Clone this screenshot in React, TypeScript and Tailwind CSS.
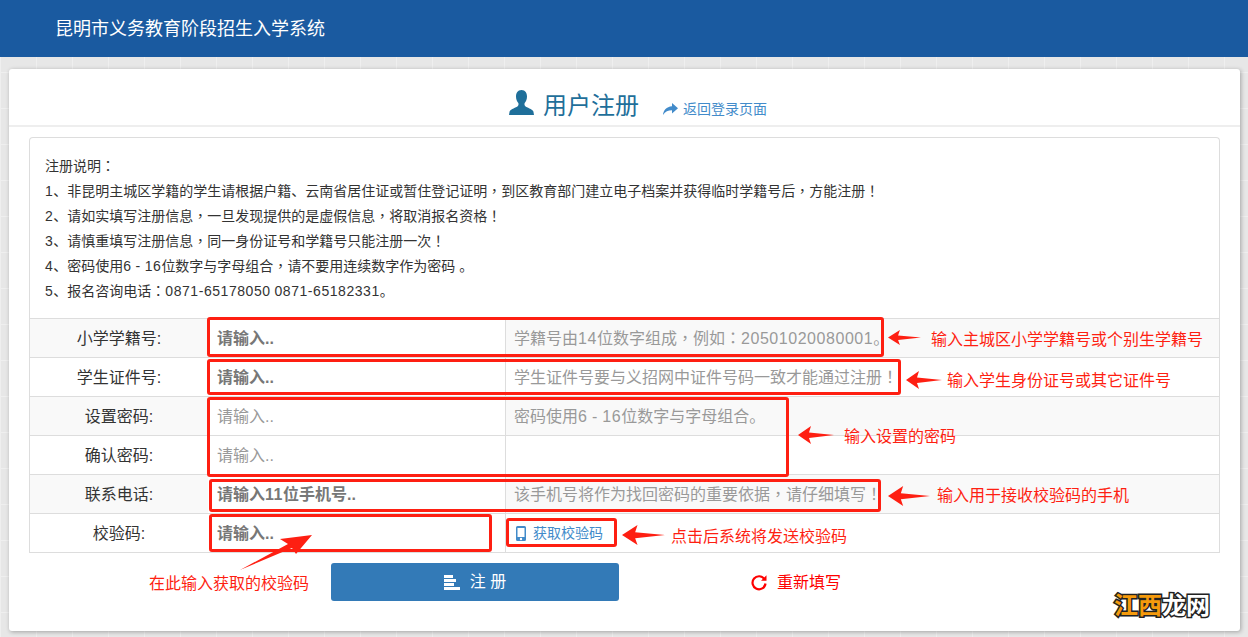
const cjk = "font-['Liberation_Sans','Noto_Sans_CJK_SC',sans-serif]";

const notes = [
  "注册说明：",
  "1、非昆明主城区学籍的学生请根据户籍、云南省居住证或暂住登记证明，到区教育部门建立电子档案并获得临时学籍号后，方能注册！",
  "2、请如实填写注册信息，一旦发现提供的是虚假信息，将取消报名资格！",
  "3、请慎重填写注册信息，同一身份证号和学籍号只能注册一次！",
  "4、密码使用6 - 16位数字与字母组合，请不要用连续数字作为密码 。",
  "5、报名咨询电话：0871-65178050 0871-65182331。",
];

const rows = [
  { label: "小学学籍号:", input: "请输入..", hint: "学籍号由14位数字组成，例如：20501020080001。", bold: true, shade: true },
  { label: "学生证件号:", input: "请输入..", hint: "学生证件号要与义招网中证件号码一致才能通过注册！", bold: true, shade: false },
  { label: "设置密码:", input: "请输入..", hint: "密码使用6 - 16位数字与字母组合。", bold: false, shade: true },
  { label: "确认密码:", input: "请输入..", hint: "", bold: false, shade: false },
  { label: "联系电话:", input: "请输入11位手机号..", hint: "该手机号将作为找回密码的重要依据，请仔细填写！", bold: true, shade: true },
];

// red boxes drawn over the form
const marks = [
  "left-[207px] top-[317px] w-[677px] h-[40px]",
  "left-[207px] top-[359px] w-[694px] h-[36px]",
  "left-[207px] top-[397px] w-[582px] h-[80px]",
  "left-[209px] top-[479px] w-[672px] h-[33px]",
  "left-[209px] top-[514px] w-[283px] h-[38px]",
  "left-[506px] top-[518px] w-[111px] h-[29px]",
];

const arrows = [
  "left-[888px] top-[330px] w-[33px] h-[15px]",
  "left-[906px] top-[371px] w-[36px] h-[18px]",
  "left-[798px] top-[426px] w-[36px] h-[18px]",
  "left-[888px] top-[486px] w-[42px] h-[20px]",
  "left-[622px] top-[525px] w-[43px] h-[20px]",
];

const notesText = [
  { text: "输入主城区小学学籍号或个别生学籍号", pos: "left-[931px] top-[328px]" },
  { text: "输入学生身份证号或其它证件号", pos: "left-[947px] top-[369px]" },
  { text: "输入设置的密码", pos: "left-[844px] top-[425px]" },
  { text: "输入用于接收校验码的手机", pos: "left-[937px] top-[484px]" },
  { text: "点击后系统将发送校验码", pos: "left-[671px] top-[525px]" },
  { text: "在此输入获取的校验码", pos: "left-[149px] top-[572px]" },
];

// 标点居中（TC字形），数字略宽
function Txt({ text }: { text: string }) {
  const parts = text.split(/([，：！]|[0-9-]+)/).filter(Boolean);
  return (
    <>
      {parts.map((p, i) => {
        if (/^[，：！]$/.test(p)) {
          return (
            <span key={i} className="font-['Noto_Sans_CJK_TC',sans-serif] leading-none">
              {p}
            </span>
          );
        }
        if (/^[0-9-]+$/.test(p)) {
          return (
            <span key={i} className="tracking-[0.55px]">
              {p}
            </span>
          );
        }
        return <span key={i}>{p}</span>;
      })}
    </>
  );
}

function LeftArrow({ className }: { className: string }) {
  return (
    <svg className={`absolute ${className}`} viewBox="0 0 36 18" preserveAspectRatio="none">
      <polygon points="0,9 13,0 11,6.5 36,9 11,12 13,18" fill="#fe1f12" />
    </svg>
  );
}

function UserIcon() {
  return (
    <svg width="25" height="25" viewBox="0 0 25 25" className="absolute left-0 top-0">
      <path
        d="M12.500 0C8.600 0 7 3 7 6.500c0 2.800 1 5 2.300 6.500.4.900.3 2.200-.4 2.900C7 17.800 2 18.600.6 21.500L0 25h25l-.6-3.500c-1.400-2.900-6.400-3.700-8.300-5.600-.7-.7-.8-2-.4-2.900C17 11.500 18 9.300 18 6.500 18 3 16.400 0 12.500 0z"
        fill="#1f6f9a"
      />
    </svg>
  );
}

function ShareIcon() {
  return (
    <svg width="15" height="12" viewBox="0 0 15 12" className="mr-[5px]">
      <path d="M9 0l6 5.200-6 5.300V7.300C5 7.300 2.300 8.500 0 12c.4-5 3.400-8.300 9-8.800z" fill="#428bca" />
    </svg>
  );
}

function PhoneIcon() {
  return (
    <svg width="10" height="15" viewBox="0 0 10 15" className="mr-[7px]">
      <path
        fillRule="evenodd"
        d="M1.500 0h7A1.500 1.500 0 0 1 10 1.500v12A1.500 1.500 0 0 1 8.500 15h-7A1.500 1.500 0 0 1 0 13.500v-12A1.500 1.500 0 0 1 1.500 0zM1.500 2v9h7V2zM5 11.800a1.200 1.200 0 1 0 0 2.400 1.200 1.200 0 0 0 0-2.400z"
        fill="#428bca"
      />
    </svg>
  );
}

function BarsIcon() {
  return (
    <svg width="16" height="15" viewBox="0 0 16 15" className="mr-[10px]">
      <rect x="0" y="0" width="9" height="3" fill="#fff" />
      <rect x="0" y="4" width="12" height="3" fill="#fff" />
      <rect x="0" y="8" width="10" height="3" fill="#fff" />
      <rect x="0" y="12" width="16" height="3" fill="#fff" />
    </svg>
  );
}

function RefreshIcon() {
  return (
    <svg width="16" height="16" viewBox="0 0 16 16" className="mr-[10px]">
      <path d="M13.500 4.200A6.500 6.500 0 1 0 14.500 8.500" fill="none" stroke="#fe0000" strokeWidth="2.200" />
      <polygon points="10,5.800 15.500,5.800 15.500,0.300" fill="#fe0000" />
    </svg>
  );
}

export default function App() {
  return (
    <div
      className={`relative h-[637px] overflow-hidden bg-[#e7e7e7] bg-[linear-gradient(#efefef_1px,transparent_1px),linear-gradient(90deg,#efefef_1px,transparent_1px)] bg-[size:36px_36px] ${cjk}`}
    >
      {/* 顶部标题栏 */}
      <header className="flex h-[57px] items-center bg-[#1a5aa0] pl-[55px] text-[18px] leading-[56px] text-white">
        昆明市义务教育阶段招生入学系统
      </header>

      <main className="mx-[9px] mr-[8px] mt-[12px] h-[562px] rounded-[3px] bg-white shadow-[1px_1px_4px_rgba(0,0,0,0.3)]">
        <div className="flex h-[58px] border-b-2 border-[#eeeeee] pl-[500px] pt-[21px]">
          <div className="relative flex pl-[34px]">
            <div className="absolute left-0 top-0 h-[25px] w-[25px]">
              <UserIcon />
            </div>
            <h1 className="mt-[1px] text-[24px] leading-[30px] text-[#1f6f9a]">用户注册</h1>
          </div>
          <a className="ml-[24px] mt-[9px] flex h-[20px] items-center text-[14px] text-[#428bca]">
            <ShareIcon />
            返回登录页面
          </a>
        </div>

        <div className="mx-[20px] mt-[10px]">
          <section className="h-[181px] rounded-t-[4px] border border-b-0 border-[#dddddd] pl-[15px] pt-[16px] text-[14px] leading-[25px] text-[#333333]">
            {notes.map((n) => (
              <p key={n} className="h-[25px]">
                <Txt text={n} />
              </p>
            ))}
          </section>

          {/* 注册表单 */}
          <div className="border-x border-[#dddddd]">
            {rows.map((r) => (
              <div
                key={r.label}
                className={`flex h-[39px] border-t border-[#dddddd] ${r.shade ? "bg-[#f9f9f9]" : "bg-white"}`}
              >
                <div className="w-[178px] text-center text-[16px] leading-[40px] text-[#333333]">{r.label}</div>
                <div
                  className={`w-[297px] bg-white pl-[9px] text-[16px] leading-[40px] ${
                    r.bold ? "font-bold text-[#777777]" : "text-[#999999]"
                  }`}
                >
                  <Txt text={r.input} />
                </div>
                <div className="flex-1 whitespace-nowrap border-l border-[#dddddd] pl-[8px] text-[16px] leading-[40px] text-[#999999]">
                  <Txt text={r.hint} />
                </div>
              </div>
            ))}
            <div className="flex h-[40px] border-y border-[#dddddd]">
              <div className="w-[178px] text-center text-[16px] leading-[40px] text-[#333333]">校验码:</div>
              <div className="w-[297px] pl-[9px] text-[16px] font-bold leading-[40px] text-[#777777]">请输入..</div>
              <div className="flex flex-1 items-center border-l border-[#dddddd] pl-[10px] text-[14px] text-[#428bca]">
                <PhoneIcon />
                获取校验码
              </div>
            </div>
          </div>

          <div className="mt-[10px] flex items-center">
            <button className="ml-[302px] flex h-[38px] w-[288px] items-center justify-center rounded-[3px] bg-[#337ab7] text-[16px] text-white">
              <BarsIcon />
              <span>注 册</span>
            </button>
            <div className="ml-[132px] mt-[1px] flex items-center text-[16px] text-[#fe0000]">
              <RefreshIcon />
              重新填写
            </div>
          </div>
        </div>
      </main>

      {/* 截图上的红色标注 */}
      {marks.map((m) => (
        <div key={m} className={`absolute rounded-[3px] border-[3px] border-[#fe1f12] ${m}`} />
      ))}
      {arrows.map((a) => (
        <LeftArrow key={a} className={a} />
      ))}
      <svg className="absolute left-[238px] top-[532px] h-[40px] w-[76px]" viewBox="0 0 76 40">
        <polygon points="2,38 50,12 42,7 74,3 58,22 54,16" fill="#fe1f12" />
      </svg>
      {notesText.map((t) => (
        <div key={t.text} className={`absolute whitespace-nowrap text-[16px] leading-[24px] text-[#fe1f12] ${t.pos}`}>
          {t.text}
        </div>
      ))}

      {/* 水印 */}
      <div className="absolute left-[1114px] top-[590px] whitespace-nowrap text-[24px] font-bold leading-[32px] [-webkit-text-stroke:3px_#222222] [paint-order:stroke_fill]">
        <span className="text-[#f59a0c]">江西</span>
        <span className="text-white">龙网</span>
      </div>
    </div>
  );
}
